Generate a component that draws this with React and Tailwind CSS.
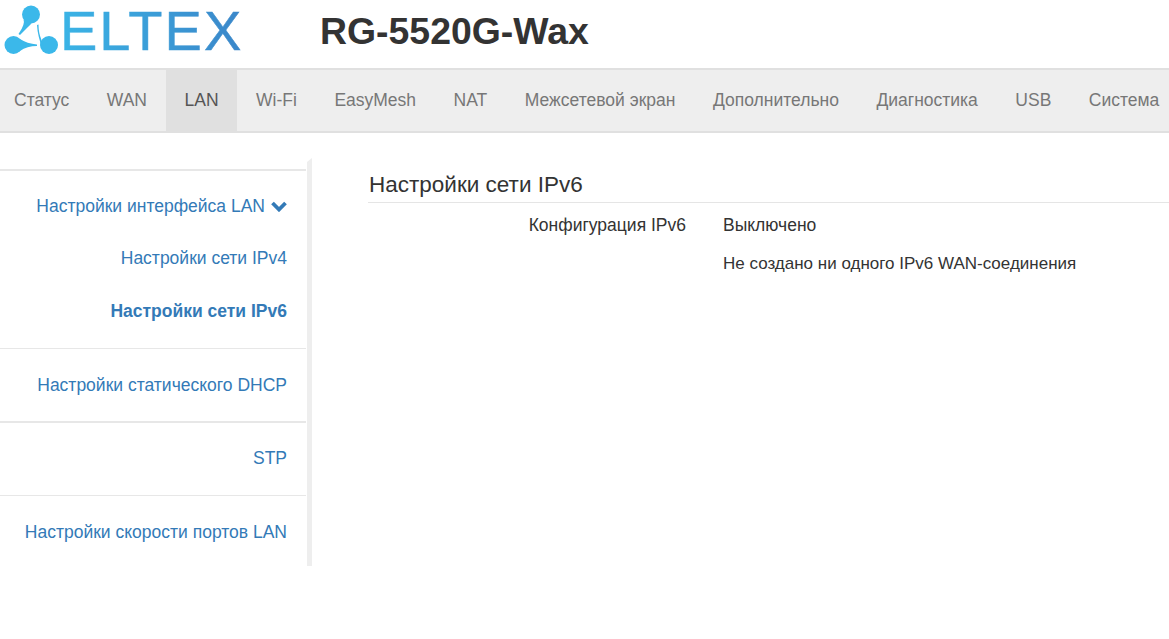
const NAV = ['Статус', 'WAN', 'LAN', 'Wi-Fi', 'EasyMesh', 'NAT', 'Межсетевой экран', 'Дополнительно', 'Диагностика', 'USB', 'Система']

function LogoMark() {
  return (
    <svg width="60" height="68" viewBox="0 0 60 68" className="shrink-0">
      <g fill="#3bb8ea">
        {/* three drops, each with a tail that narrows toward the middle */}
        <circle cx="31" cy="14.5" r="9" />
        <path d="M23.5 19.5 Q25.5 24 18.5 34 L20 35 Q27 28 31.5 23.5 Z" />
        <circle cx="13.5" cy="45" r="9" />
        <path d="M20 39 Q27 43.5 37 44.5 L37 46 Q27 46 20 51 Z" />
        <circle cx="49" cy="45" r="9" />
        <path d="M41.5 40 Q38.5 33 38.5 24.5 L37 25 Q37.5 36 43 50 Z" />
      </g>
    </svg>
  )
}

function SideLink({ children, bold, className = '' }) {
  return (
    <div className={`flex items-center justify-end pr-[19px] text-[17.5px] text-[#337ab7] ${bold ? 'font-bold' : ''} ${className}`}>
      {children}
    </div>
  )
}

export default function App() {
  return (
    <div className="min-h-[639px] overflow-hidden bg-white text-[#333] font-['Liberation_Sans',Arial,sans-serif]">
      {/* Header */}
      <div className="flex h-[68px] items-center">
        <div className="flex w-[320px] shrink-0 items-center">
          <LogoMark />
          <span className="-mt-[6px] bg-gradient-to-r from-[#3ab4e6] to-[#3a86c9] bg-clip-text text-[56px] leading-none tracking-[2px] text-transparent [-webkit-text-stroke:0.5px_transparent]">
            ELTEX
          </span>
        </div>
        <div className="-mt-[4px] text-[37.4px] font-bold leading-none">RG-5520G-Wax</div>
      </div>

      {/* Nav */}
      <div className="flex h-[65px] flex-nowrap overflow-hidden border-y-2 border-[#e0e0e0] bg-[#eeeeee]">
        {NAV.map((item, i) => (
          <div
            key={item}
            className={`flex shrink-0 items-center whitespace-nowrap pr-[18.75px] text-[17.5px] ${i === 0 ? 'pl-[14px]' : 'pl-[18.75px]'} ${item === 'LAN' ? 'bg-[#e0e0e0] text-[#555]' : 'text-[#777]'}`}
          >
            {item}
          </div>
        ))}
      </div>

      {/* Body */}
      <div className="flex">
        <div className="mt-[25px] h-[408px] w-[312px] shrink-0 border-r-[5px] border-t-[4px] border-r-[#eeeeee] border-t-transparent pr-[1px]">
          <div className="mt-[7px] border-t-2 border-[#e7e7e7]">
            <SideLink className="h-[69px] pt-[1px]">
              Настройки интерфейса LAN
              <svg width="16" height="11" viewBox="0 0 16 11" className="ml-[6px]">
                <path d="M1.5 2 L8 8.5 L14.5 2" fill="none" stroke="#337ab7" strokeWidth="3.8" />
              </svg>
            </SideLink>
            <SideLink className="h-[37px]">Настройки сети IPv4</SideLink>
            <SideLink bold className="h-[71px] pb-[2px]">Настройки сети IPv6</SideLink>
            <SideLink className="h-[73px] border-t border-[#e7e7e7]">Настройки статического DHCP</SideLink>
            <SideLink className="h-[74px] border-t-2 border-[#e7e7e7] pb-[2px]">STP</SideLink>
            <SideLink className="h-[71px] border-t border-[#e7e7e7] pt-[2px]">Настройки скорости портов LAN</SideLink>
          </div>
        </div>

        <div className="ml-[56px] min-w-0 flex-1 pt-[37px]">
          <div className="border-b border-[#e5e5e5] pb-[2px] pl-[1px] text-[22.5px] leading-[30px]">Настройки сети IPv6</div>
          <div className="mt-[9px] flex text-[17.5px] leading-[26px]">
            <div className="w-[318px] text-right">Конфигурация IPv6</div>
            <div className="ml-[37px]">Выключено</div>
          </div>
          <div className="mt-[13px] ml-[355px] text-[17px] leading-[26px]">Не создано ни одного IPv6 WAN-соединения</div>
        </div>
      </div>
    </div>
  )
}
